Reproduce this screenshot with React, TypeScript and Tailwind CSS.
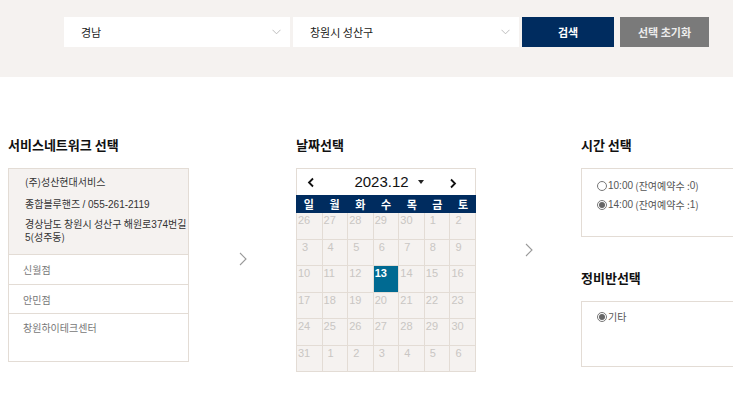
import React from 'react';

const KR = { fontFamily: '"Noto Sans CJK KR", "Noto Sans", sans-serif' };
const NUM = { fontFamily: '"Liberation Sans", Arial, sans-serif' };

function Chevron({ className = '' }: { className?: string }) {
  return (
    <svg width="8" height="14" viewBox="0 0 8 14" className={className}>
      <path d="M1 1l6 6-6 6" fill="none" stroke="#9a9a9a" strokeWidth="1.1" />
    </svg>
  );
}

function SelectBox({ label }: { label: string }) {
  return (
    <div className="flex h-[30px] w-[226px] items-center justify-between bg-white pl-[17px] pr-[9px]">
      <span className="text-[11px] text-[#222]">{label}</span>
      <svg width="9" height="6" viewBox="0 0 9 6">
        <path d="M0.5 0.8l4 4 4-4" fill="none" stroke="#b5b5b5" strokeWidth="0.9" />
      </svg>
    </div>
  );
}

const weeks: number[][] = [
  [26, 27, 28, 29, 30, 1, 2],
  [3, 4, 5, 6, 7, 8, 9],
  [10, 11, 12, 13, 14, 15, 16],
  [17, 18, 19, 20, 21, 22, 23],
  [24, 25, 26, 27, 28, 29, 30],
  [31, 1, 2, 3, 4, 5, 6],
];

function Calendar() {
  const days = ['일', '월', '화', '수', '목', '금', '토'];
  return (
    <div className="w-[180px]">
      <div className="flex h-[27px] items-center justify-between border border-b-0 border-[#e3dcd5] bg-white px-[10px]">
        <svg width="8" height="11" viewBox="0 0 8 11">
          <path d="M6 1.5L2 5.5l4 4" fill="none" stroke="#111" strokeWidth="1.8" />
        </svg>
        <div className="flex items-center gap-[9px] pl-[14px]" style={NUM}>
          <span className="text-[15px] text-[#111]">2023.12</span>
          <svg width="6" height="4" viewBox="0 0 6 4">
            <path d="M0 0h6L3 4z" fill="#222" />
          </svg>
        </div>
        <svg width="8" height="11" viewBox="0 0 8 11" className="mr-[8px] mt-[3px]">
          <path d="M2 1.5l4 4-4 4" fill="none" stroke="#111" strokeWidth="1.8" />
        </svg>
      </div>
      <div className="grid h-[18px] grid-cols-7 items-center bg-[#002c5f]">
        {days.map((d) => (
          <span key={d} className="text-center text-[11px] font-bold leading-none text-white" style={KR}>
            {d}
          </span>
        ))}
      </div>
      <div className="grid grid-cols-7 border-l border-[#e3dcd5]">
        {weeks.flat().map((n, i) => {
          const sel = i === 17;
          return (
            <div
              key={i}
              className={`h-[26.5px] border-b border-r border-[#e3dcd5] text-[11px] leading-[14px] ${
                sel ? 'bg-[#006a92] font-bold text-white' : 'bg-[#f5f2f0] text-[#c9c6c3]'
              } ${n < 10 ? 'pl-[5px]' : 'pl-[1px]'}`}
              style={NUM}
            >
              {n}
            </div>
          );
        })}
      </div>
    </div>
  );
}

function Radio({ checked }: { checked: boolean }) {
  return (
    <span className="mr-[1px] inline-flex h-[10px] w-[10px] items-center justify-center rounded-full border border-[#777] bg-white">
      {checked && <span className="h-[6px] w-[6px] rounded-full bg-[#666]" />}
    </span>
  );
}

export default function App() {
  return (
    <div className="h-[405px] w-[733px] overflow-hidden bg-white" style={KR}>
      <div className="flex h-[77px] items-start gap-[3px] bg-[#f5f2f0] pl-[64px] pt-[17px]">
        <SelectBox label="경남" />
        <SelectBox label="창원시 성산구" />
        <div className="flex h-[30px] w-[92px] items-center justify-center bg-[#002c5f] text-[11px] font-bold text-white">
          검색
        </div>
        <div className="ml-[3px] flex h-[30px] w-[89px] items-center justify-center bg-[#7a7a7a] text-[11px] font-bold text-[#ececec]">
          선택 초기화
        </div>
      </div>

      <div className="flex pl-[8px] pt-[57px]">
        <div className="w-[181px] shrink-0">
          <h2 className="mb-[13px] h-[21px] text-[13px] font-bold leading-[21px] text-[#111]">서비스네트워크 선택</h2>
          <div className="flex h-[194px] flex-col border border-[#e3dcd5] text-[10px]">
            <div className="h-[85px] bg-[#f5f2f0] pl-[16px] pt-[7px] leading-[12px] text-[#333]">
              <p>(주)성산현대서비스</p>
              <p className="mt-[10px]">
                종합블루핸즈 <span style={NUM}>/ 055-261-2119</span>
              </p>
              <p className="mt-[7px] leading-[12px]">
                경상남도 창원시 성산구 해원로<span style={NUM}>374</span>번길 <span style={NUM}>5</span>(성주동)
              </p>
            </div>
            <div className="flex h-[30px] items-center border-t border-[#e3dcd5] pl-[14px] text-[#777]">신월점</div>
            <div className="flex h-[29px] items-center border-t border-[#e3dcd5] pl-[14px] text-[#777]">안민점</div>
            <div className="flex-1 border-t border-[#e3dcd5] pl-[14px] pt-[6px] text-[#777]">창원하이테크센터</div>
          </div>
        </div>

        <div className="flex w-[107px] shrink-0 justify-center pt-[118px]">
          <Chevron />
        </div>

        <div className="w-[180px] shrink-0">
          <h2 className="mb-[13px] h-[21px] text-[13px] font-bold leading-[21px] text-[#111]">날짜선택</h2>
          <Calendar />
        </div>

        <div className="flex w-[105px] shrink-0 justify-center pt-[109px]">
          <Chevron />
        </div>

        <div className="w-[170px] shrink-0">
          <h2 className="mb-[13px] h-[21px] text-[13px] font-bold leading-[21px] text-[#111]">시간 선택</h2>
          <div className="h-[69px] border border-[#e3dcd5] pl-[15px] pt-[11px] text-[10px] leading-[12px] text-[#555]">
            <p className="flex items-center">
              <Radio checked={false} />
              <span style={NUM}>10:00</span>&nbsp;(잔여예약수 :<span style={NUM}>0</span>)
            </p>
            <p className="mt-[7px] flex items-center">
              <Radio checked />
              <span style={NUM}>14:00</span>&nbsp;(잔여예약수 :<span style={NUM}>1</span>)
            </p>
          </div>
          <h2 className="mb-[13px] mt-[30px] h-[21px] text-[13px] font-bold leading-[21px] text-[#111]">정비반선택</h2>
          <div className="h-[66px] border border-[#e3dcd5] pl-[15px] pt-[9px] text-[10px] leading-[12px] text-[#555]">
            <p className="flex items-center">
              <Radio checked />
              기타
            </p>
          </div>
        </div>
      </div>
    </div>
  );
}
